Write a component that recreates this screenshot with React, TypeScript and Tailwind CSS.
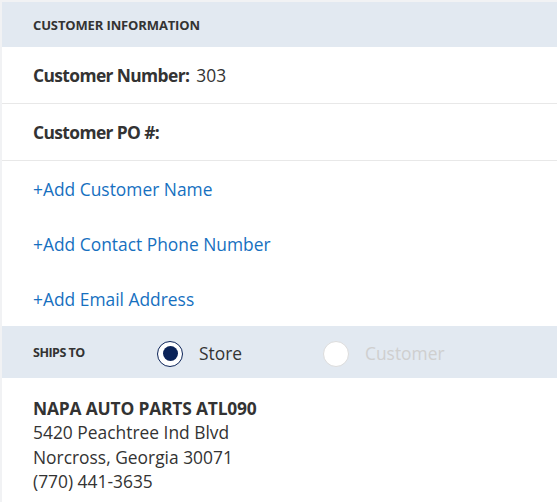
import React from 'react';

const font = { fontFamily: '"Open Sans", "Noto Sans", sans-serif' };

const Radio = ({ checked }: { checked: boolean }) =>
  checked ? (
    <span className="w-[26px] h-[26px] rounded-full border-[1.5px] border-[#0b2358] bg-white flex items-center justify-center">
      <span className="w-[15px] h-[15px] rounded-full bg-[#0b2358]" />
    </span>
  ) : (
    <span className="w-[26px] h-[26px] rounded-full border border-[#dcdcdc] bg-white" />
  );

export default function App() {
  const links = ['+Add Customer Name', '+Add Contact Phone Number', '+Add Email Address'];
  return (
    <div className="w-[557px] h-[502px] bg-[#f1f2f4] pl-[2px] pt-[2px] overflow-hidden text-[#333]" style={font}>
      <div className="bg-white h-full">
        <div className="h-[45px] bg-[#e2e9f1] flex items-center pl-[31px] pt-[2px] text-[13px] font-bold uppercase tracking-[-0.01em]">
          Customer Information
        </div>
        <div className="h-[57px] flex items-center pl-[31px] border-b border-[#e8e8e8] text-[17.4px]">
          <span className="font-bold tracking-[-0.035em]">Customer Number:</span>
          <span className="ml-[7px]">303</span>
        </div>
        <div className="h-[57px] flex items-center pl-[31px] border-b border-[#e8e8e8] text-[17.4px] font-bold tracking-[-0.035em]">
          Customer PO #:
        </div>
        {links.map((l) => (
          <div key={l} className="h-[55px] flex items-center pl-[31px] pt-[2px] text-[17.4px] text-[#1670bf]">
            {l}
          </div>
        ))}
        <div className="h-[52px] bg-[#e2e9f1] flex items-center pl-[31px] pt-[3px]">
          <span className="w-[124px] text-[12.5px] font-bold uppercase tracking-[-0.04em]">Ships To</span>
          <Radio checked />
          <span className="ml-[16px] w-[124px] text-[17.4px]">Store</span>
          <Radio checked={false} />
          <span className="ml-[16px] text-[17.4px] text-[#cfcfcf]">Customer</span>
        </div>
        <div className="pl-[31px] pt-[18px] text-[17.4px] leading-[24.3px]">
          <div className="font-bold tracking-[-0.01em]">NAPA AUTO PARTS ATL090</div>
          <div>5420 Peachtree Ind Blvd</div>
          <div>Norcross, Georgia 30071</div>
          <div>(770) 441-3635</div>
        </div>
      </div>
    </div>
  );
}
